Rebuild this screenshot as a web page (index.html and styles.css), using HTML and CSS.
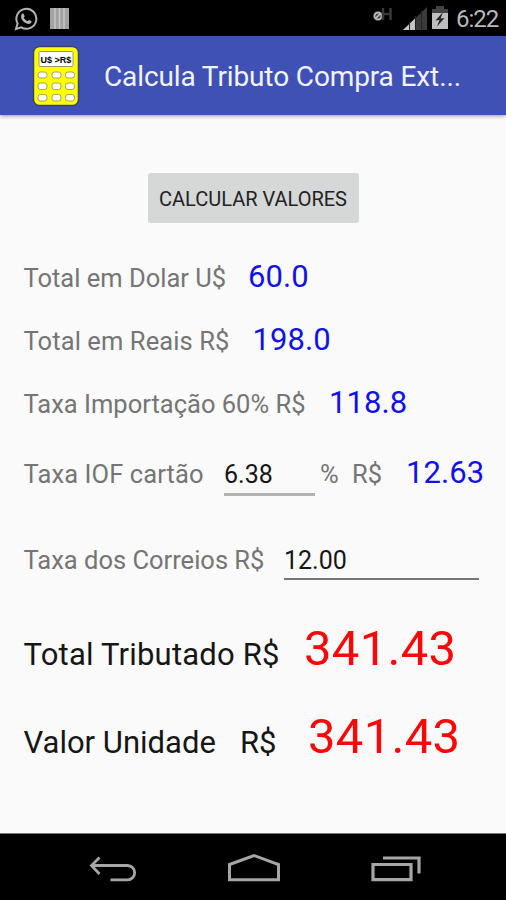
FILE: index.html
```
<!DOCTYPE html>
<html lang="pt-BR">
<head>
  <meta charset="UTF-8" />
  <meta name="viewport" content="width=device-width, initial-scale=1.0"/>
  <title>Calcula Tributo Compra Exterior</title>
  <link rel="stylesheet" href="styles.css">
</head>
<body>
  <div class="status-bar">
    <svg class="whatsapp" width="24" height="24" viewBox="0 0 24 24">
      <path d="M2 22l1.6-5.4A10 10 0 1 1 7.300 20.400z" fill="none" stroke="#b4b4b4" stroke-width="2"/>
      <path d="M8.400 6.600c.8-.4 1.200 0 1.400.6l.8 1.900c.1.500-.8 1.300-.8 1.600 .8 1.600 2 2.700 3.700 3.400 .5 0 1.200-1.300 1.700-1.100l2 1c.6.4.3 1.400-.2 2-2.300 2.200-5 .7-7.200-1.200-2.200-2-4.100-5.500-1.400-8.200z" fill="#b4b4b4"/>
    </svg>
    <svg class="bars" width="19" height="22" viewBox="0 0 19 22">
      <rect width="19" height="21" fill="#a2a2a2"/>
      <path d="M5 0v21M9.500 0v21M14 0v21" stroke="#c8c8c8" stroke-width="1.500"/>
    </svg>
    <svg class="network" width="20" height="16" viewBox="0 0 20 16">
      <circle cx="5" cy="9" r="3.600" fill="#444" stroke="#bbb" stroke-width="2"/>
      <path d="M3 11l4-4" stroke="#ccc" stroke-width="1.500"/>
      <path d="M10 1v12M17.500 1v12M10 7h7.500" stroke="#383838" stroke-width="2.500" fill="none"/>
    </svg>
    <svg class="signal" width="24" height="23" viewBox="0 0 24 23">
      <path d="M0 23L24 0v23z" fill="#3a3a3a"/>
      <path d="M0 23L12.500 11v12z" fill="#c4c4c4"/>
      <path d="M6.500 15v8M12.500 9v14M18.500 4v19" stroke="#222" stroke-width="1"/>
    </svg>
    <svg class="battery" width="16" height="23" viewBox="0 0 16 23">
      <path d="M4 0h8v3h4v4H0V3h4z" fill="#444"/>
      <path d="M0 7h16v16H0z" fill="#bdbdbd"/>
      <path d="M11 6L3.500 14.500l4-.5L5 20.500l7.500-8.500-4 .5z" fill="#222"/>
    </svg>
    <span class="clock">6:22</span>
  </div>

  <div class="app-bar">
    <svg class="logo" width="48" height="62" viewBox="0 0 48 62">
      <rect x="1.500" y="1.500" width="45" height="59" rx="6" fill="#ff0" stroke="#39456f" stroke-width="1.500"/>
      <rect x="7" y="6.500" width="34" height="15" rx="1" fill="#fff" stroke="#9a9a60"/>
      <text x="8.500" y="17.500" class="logo-text">U$ &gt;R$</text>
      <g fill="#fff" stroke="#a3a35a">
        <rect x="6" y="27" width="9" height="6" rx="2.500"/>
        <rect x="20" y="27" width="9" height="6" rx="2.500"/>
        <rect x="33.500" y="27" width="9" height="6" rx="2.500"/>
        <rect x="6" y="38" width="9" height="6.500" rx="2.500"/>
        <rect x="20" y="38" width="9" height="6.500" rx="2.500"/>
        <rect x="33.500" y="38" width="9" height="6.500" rx="2.500"/>
        <rect x="6" y="49.500" width="9" height="6.500" rx="2.500"/>
        <rect x="20" y="49.500" width="9" height="6.500" rx="2.500"/>
        <rect x="33.500" y="49.500" width="9" height="6.500" rx="2.500"/>
      </g>
    </svg>
    <h1>Calcula Tributo Compra Ext...</h1>
  </div>

  <div class="content">
    <button class="calc">CALCULAR VALORES</button>

    <div class="row">
      <label class="dolar">Total em Dolar U$</label>
      <span class="value">60.0</span>
    </div>
    <div class="row">
      <label class="reais">Total em Reais R$</label>
      <span class="value">198.0</span>
    </div>
    <div class="row">
      <label class="importacao">Taxa Importação 60% R$</label>
      <span class="value">118.8</span>
    </div>
    <div class="row row-iof">
      <label class="iof" for="iof">Taxa IOF cartão</label>
      <input class="input-iof" type="text" id="iof" value="6.38" />
      <label class="percent">%</label>
      <label class="moeda">R$</label>
      <span class="value">12.63</span>
    </div>
    <div class="row row-correios">
      <label class="correios" for="correios">Taxa dos Correios R$</label>
      <input class="input-correios" type="text" id="correios" value="12.00" />
    </div>
    <div class="row row-total">
      <label class="tributado">Total Tributado R$</label>
      <span class="total">341.43</span>
    </div>
    <div class="row row-total">
      <label class="unidade">Valor Unidade</label>
      <label class="unidade-moeda">R$</label>
      <span class="total">341.43</span>
    </div>
  </div>

  <div class="nav-bar">
    <svg width="48" height="28" viewBox="0 0 48 28">
      <path d="M3 11.500h35.500a7 7 0 0 1 0 14.300H21.500M10.500 3.500L2.500 11.500 10.500 20" fill="none" stroke="#a6a6a6" stroke-width="2.800"/>
    </svg>
    <svg width="54" height="30" viewBox="0 0 54 30">
      <path d="M2.500 11.500L27 2.500l24.500 9v15.200h-49z" fill="none" stroke="#a6a6a6" stroke-width="3"/>
    </svg>
    <svg width="50" height="28" viewBox="0 0 50 28">
      <path d="M2 10.500h38v15.200H2zM12 4h36v15.500" fill="none" stroke="#a6a6a6" stroke-width="3.200"/>
    </svg>
  </div>
</body>
</html>
```
FILE: styles.css
```
* {
  box-sizing: border-box;
}

body {
  font-family: Roboto, 'Noto Sans', sans-serif;
  background: #fafafa;
  margin: 0;
  width: 506px;
  height: 900px;
  display: flex;
  flex-direction: column;
  overflow: hidden;
}

svg {
  display: block;
  flex: none;
}

.status-bar {
  height: 36px;
  background: #000;
  display: flex;
  align-items: flex-start;
  padding: 7px 7px 0 14px;
}

.bars {
  margin-left: 12px;
  margin-top: 1px;
}

.network {
  margin-left: auto;
  margin-right: 10px;
}

.signal {
  margin-right: 5px;
}

.battery {
  margin-right: 8px;
  margin-top: -1px;
}

.clock {
  color: #b9b9b9;
  font-size: 24px;
  line-height: 24px;
  width: 43px;
  letter-spacing: -1px;
}

.app-bar {
  height: 79px;
  flex: none;
  background: #3f51b5;
  display: flex;
  align-items: center;
  padding-left: 32px;
  box-shadow: 0 1px 4px rgba(0,0,0,0.4);
}

.logo-text {
  font-family: 'Liberation Sans', sans-serif;
  font-size: 9px;
  font-weight: bold;
}

h1 {
  margin: 2px 0 0 24px;
  color: #f1f3ff;
  font-size: 28px;
  font-weight: 400;
  letter-spacing: -0.12px;
  white-space: nowrap;
}

.content {
  flex: 1;
  display: flex;
  flex-direction: column;
  padding: 58px 0 0 23.5px;
}

.calc {
  width: 211px;
  height: 50px;
  margin: 0 0 22px 124.5px;
  padding: 2px 1px 0 0;
  flex: none;
  border: none;
  border-radius: 3px;
  background: #d6d7d7;
  color: #222;
  font-family: inherit;
  font-size: 20px;
  white-space: nowrap;
}

.row {
  display: flex;
  align-items: baseline;
  height: 63px;
  line-height: 63px;
  flex: none;
  white-space: nowrap;
}

label {
  flex: none;
  color: #757575;
  font-size: 25.5px;
}

.value {
  color: #1212e6;
  font-size: 31px;
  letter-spacing: 0.1px;
}

.dolar {
  width: 224.5px;
}

.reais {
  width: 229px;
  letter-spacing: 0.1px;
}

.importacao {
  width: 305.5px;
}

.iof {
  width: 200.5px;
  letter-spacing: 0.1px;
}

.percent {
  width: 32px;
}

.moeda {
  width: 54px;
}

.correios {
  width: 260.5px;
}

.row-iof {
  height: 60px;
  line-height: 60px;
  margin-top: 9px;
}

.row-correios {
  height: 60px;
  line-height: 60px;
  margin-top: 27px;
}

input {
  flex: none;
  height: 36px;
  line-height: 30px;
  padding: 0;
  border: none;
  border-bottom: 2px solid #777;
  background: none;
  color: #161616;
  font-family: inherit;
  font-size: 25px;
  outline: none;
}

.input-iof {
  width: 91px;
  height: 40px;
  margin-right: 5px;
  border-bottom: 3px solid #b2b2b2;
}

.input-correios {
  width: 195px;
}

.row-total {
  height: 88px;
  line-height: 88px;
}

.row-correios + .row-total {
  margin-top: 15px;
}

.row-total label {
  color: #161616;
  font-size: 31px;
}

.row-total .tributado {
  width: 280.5px;
  letter-spacing: 0.2px;
}

.unidade {
  width: 216.5px;
}

.unidade-moeda {
  width: 68px;
}

.total {
  color: #f80808;
  font-size: 49px;
  letter-spacing: 0.3px;
}

.nav-bar {
  height: 67px;
  flex: none;
  background: #000;
  border-top: 1px solid #777;
  display: flex;
  justify-content: space-between;
  align-items: center;
  padding: 2px 85px 0 89px;
}
```
